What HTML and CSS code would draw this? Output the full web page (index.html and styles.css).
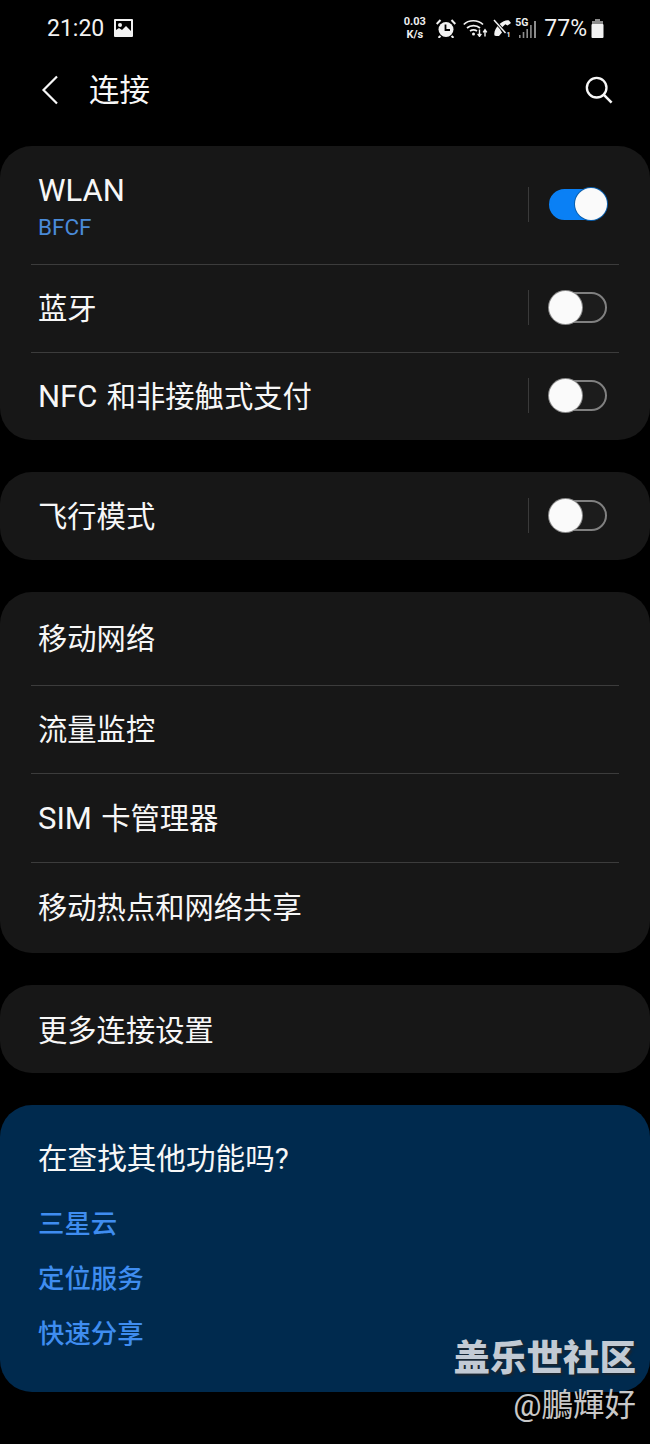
FILE: index.html
```html
<!DOCTYPE html>
<html lang="zh-CN">
<head>
<meta charset="utf-8">
<title>连接</title>
<link rel="stylesheet" href="styles.css">
</head>
<body>
<div class="screen">
  <div class="status">
    <div class="status-left">
      <span class="time">21:20</span>
      <svg class="ic-pic" viewBox="0 0 19 18"><path fill="#f2f2f2" fill-rule="evenodd" d="M1 0h17a1 1 0 0 1 1 1v16a1 1 0 0 1-1 1H1a1 1 0 0 1-1-1V1a1 1 0 0 1 1-1zm1 2v9l3-2 3 2 4-4 5 5V2z"/><circle cx="6" cy="6" r="2" fill="#f2f2f2"/></svg>
    </div>
    <div class="status-right">
      <div class="speed"><span>0.03</span><span>K/s</span></div>
      <svg class="ic-alarm" viewBox="0 0 20 19"><circle cx="10" cy="10.500" r="7.500" fill="#f2f2f2"/><path d="M9.500 5.500v5.500h4.500" fill="none" stroke="#000" stroke-width="1.800"/><path d="M.7 5L4.500 1M19.300 5L15.500 1M4.500 17l-2 1.800M15.500 17l2 1.800" stroke="#f2f2f2" stroke-width="2" fill="none"/></svg>
      <svg class="ic-wifi" viewBox="0 0 25 18"><g fill="none" stroke="#f2f2f2" stroke-width="1.700"><path d="M.8 5.500C5.500.5 15 .5 20 5.500"/><path d="M4 9c3.500-3.200 9.500-3.200 13 0"/><path d="M7 12c2-1.400 5-1.400 7 0"/></g><circle cx="10.500" cy="15" r="1.500" fill="#f2f2f2"/><path d="M16.500 10.500v6.500M14.700 14.800l1.800 2.600 1.800-2.600M22 17.500v-6.500M20.200 13.400l1.800-2.600 1.800 2.600" fill="none" stroke="#f2f2f2" stroke-width="1.400"/></svg>
      <svg class="ic-call" viewBox="0 0 19 18"><path fill="#f2f2f2" d="M1.500 16.500C.5 13 3 8 6.500 5S14 .5 16 1.500l2 2.500-3.500 2.500-2.200-1.200L9.500 8 7.500 11l1.500 2.500L6 17H3z"/><path d="M.5 .5l11.500 13" stroke="#000" stroke-width="3.200"/><path d="M1 1l11.500 13" stroke="#f2f2f2" stroke-width="1.500"/><text class="call-sim" x="13.500" y="17.500">1</text></svg>
      <div class="signal">
        <span class="net">5G</span>
        <svg class="ic-bars" viewBox="0 0 17 17"><g fill="#8c8c8c"><rect x="0" y="14" width="1.600" height="3"/><rect x="3.700" y="11" width="1.600" height="6"/><rect x="7.400" y="8" width="1.600" height="9"/><rect x="11.100" y="4" width="1.600" height="13"/><rect x="15" y="0" width="2" height="17"/></g></svg>
      </div>
      <span class="pct">77%</span>
      <svg class="ic-batt" viewBox="0 0 13 19"><path fill="#8c8c8c" d="M4 0h5v2h3v5H1V2h3z"/><rect x="0.500" y="5" width="12" height="14" rx="1" fill="#f2f2f2"/></svg>
    </div>
  </div>

  <div class="header">
    <svg class="ic-back" viewBox="0 0 18 30"><path d="M16 1.500L2.500 15 16 28.500" fill="none" stroke="#f7f7f7" stroke-width="2.200"/></svg>
    <h1 class="title">连接</h1>
    <svg class="ic-search" viewBox="0 0 30 30"><circle cx="12.500" cy="12.500" r="10.500" fill="none" stroke="#f7f7f7" stroke-width="2.500"/><path d="M20 20l8.500 8.500" stroke="#f7f7f7" stroke-width="2.700"/></svg>
  </div>

  <div class="cards">
    <section class="card">
      <div class="row row-first">
        <div class="row-text"><div class="label lat">WLAN</div><div class="sub">BFCF</div></div>
        <div class="sep"></div>
        <div class="toggle on"><div class="knob"></div></div>
      </div>
      <div class="row">
        <div class="label">蓝牙</div>
        <div class="sep"></div>
        <div class="toggle"><div class="knob"></div></div>
      </div>
      <div class="row">
        <div class="label"><span class="lat lat-inline">NFC</span> 和非接触式支付</div>
        <div class="sep"></div>
        <div class="toggle"><div class="knob"></div></div>
      </div>
    </section>

    <section class="card">
      <div class="row row-solo">
        <div class="label">飞行模式</div>
        <div class="sep"></div>
        <div class="toggle"><div class="knob"></div></div>
      </div>
    </section>

    <section class="card">
      <div class="row row-top"><div class="label">移动网络</div></div>
      <div class="row"><div class="label">流量监控</div></div>
      <div class="row row-mid"><div class="label"><span class="lat lat-inline">SIM</span> 卡管理器</div></div>
      <div class="row row-end"><div class="label">移动热点和网络共享</div></div>
    </section>

    <section class="card">
      <div class="row row-solo row-low"><div class="label">更多连接设置</div></div>
    </section>

    <section class="card card-blue">
      <div class="ask">在查找其他功能吗?</div>
      <div class="links">
        <a class="link">三星云</a>
        <a class="link">定位服务</a>
        <a class="link">快速分享</a>
      </div>
    </section>
  </div>

  <div class="watermark">
    <div class="wm-main">盖乐世社区</div>
    <div class="wm-user">@鵬輝好</div>
  </div>
</div>
</body>
</html>
```
FILE: styles.css
```css
* { box-sizing: border-box; }
html, body { margin: 0; padding: 0; background: #000; }
body {
  font-family: Roboto, "Noto Sans CJK SC", sans-serif;
  color: #f7f7f7;
}
.screen { position: relative; width: 650px; height: 1444px; overflow: hidden; background: #000; }

.status { height: 56px; display: flex; justify-content: space-between; align-items: center; padding: 0 46px 0 47px; }
.status-left { display: flex; align-items: center; gap: 10px; }
.time { font-size: 23px; color: #f2f2f2; }
.ic-pic { width: 19px; height: 18px; }
.status-right { display: flex; align-items: center; }
.speed { display: flex; flex-direction: column; align-items: center; width: 25px; font-size: 11px; font-weight: 700; line-height: 13px; color: #eee; }
.ic-alarm { width: 20px; height: 19px; margin-left: 9px; }
.ic-wifi { width: 25px; height: 18px; margin-left: 7px; }
.ic-call { width: 19px; height: 18px; margin-left: 5px; }
.call-sim { font-size: 7px; font-weight: 700; fill: #f2f2f2; }
.signal { position: relative; width: 21px; height: 20px; margin-left: 3px; }
.net { position: absolute; left: 0; top: -1px; font-size: 10.500px; font-weight: 700; line-height: 11px; color: #eee; }
.ic-bars { position: absolute; right: 0; top: 3px; width: 17px; height: 17px; }
.pct { font-size: 23px; margin-left: 8px; color: #f2f2f2; }
.ic-batt { width: 13px; height: 19px; margin-left: 4px; }

.header { height: 90px; display: flex; align-items: center; padding: 0 37px 22px 41px; }
.ic-back { width: 18px; height: 30px; }
.title { flex: 1; margin: 2px 0 0 30px; font-size: 30.500px; font-weight: 400; line-height: 44px; color: #f7f7f7; }
.ic-search { width: 28px; height: 28px; }

.cards { display: flex; flex-direction: column; gap: 32px; }
.card { background: #171717; border-radius: 32px; padding: 0 31px; }
.row { display: flex; align-items: center; height: 88px; padding: 1px 12px 0 7px; border-top: 1px solid #3c3c3c; }
.row:first-child { border-top: 0; padding-top: 0; }
.row-first { height: 118px; }
.row-top { height: 93px; }
.row-mid { height: 89px; }
.row-end { height: 91px; padding-top: 0; }
.row .sep, .row .toggle { margin-bottom: 3px; }
.row-first .sep, .row-first .toggle { margin-bottom: 2px; }
.row:first-child.row-solo { padding-top: 2px; }
.row:first-child.row-low { padding-top: 4px; }
.row-solo .sep, .row-solo .toggle { margin-bottom: 4px; }
.row-text { flex: 1; }
.label { flex: 1; font-size: 29.300px; line-height: 40px; color: #f7f7f7; }
.lat { font-size: 31px; }
.lat-inline { margin-right: 2px; }
.row-first .label { margin-top: 1px; line-height: 38px; }
.sub { margin-top: 4px; font-size: 22.500px; line-height: 26px; color: #4a8ad8; }
.sep { width: 1px; height: 35px; margin-right: 20px; background: #3a3a3a; }

.toggle { position: relative; width: 58px; height: 31px; border: 2px solid #808080; border-radius: 16px; background: #1c1c1c; }
.knob { position: absolute; left: -2px; top: -3px; width: 33px; height: 33px; border-radius: 50%; background: #fafafa; box-shadow: 0 0 0 1px #8a8a8a; }
.toggle.on { background: #0a80f5; border-color: #0a80f5; }
.toggle.on .knob { left: auto; right: -2px; top: -3px; width: 32px; height: 32px; box-shadow: 0 0 0 1px #0a5fae; }

.card-blue { background: #002a4e; height: 287px; padding: 32px 38px 0; }
.ask { font-size: 29.600px; line-height: 44px; color: #f7f7f7; }
.links { display: flex; flex-direction: column; margin-top: 15.500px; }
.link { font-size: 26.400px; font-weight: 500; line-height: 55px; color: #3f8df0; }

.watermark { position: absolute; right: 14px; top: 1332px; display: flex; flex-direction: column; align-items: flex-end; }
.wm-main { margin-top: -1px; font-family: "Noto Sans CJK SC", sans-serif; font-size: 36.500px; font-weight: 900; line-height: 50px; color: #c2cad4; text-shadow: 2px 2px 2px #1a2530; }
.wm-user { margin-top: 4px; font-size: 31.500px; line-height: 42px; color: #c8c8c8; }
```
